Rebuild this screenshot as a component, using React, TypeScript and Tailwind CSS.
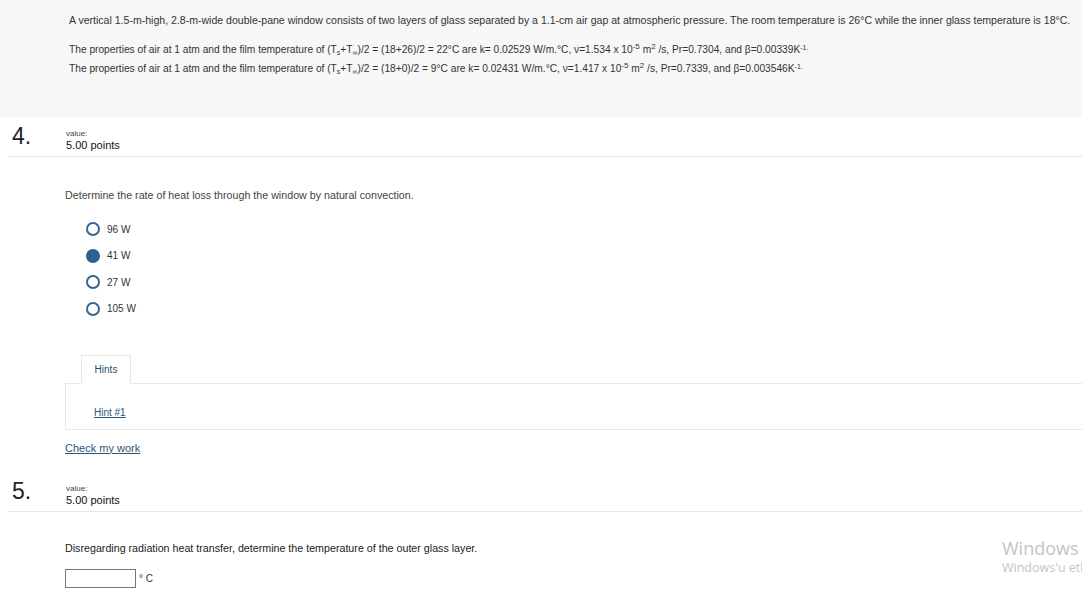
import React from 'react';

const font = { fontFamily: '"Liberation Sans", Arial, sans-serif' };

const options = ['96 W', '41 W', '27 W', '105 W'];

function Header({ num }: { num: string }) {
  return (
    <div className="flex items-start border-b border-[#e6e6e6] ml-2 h-[40px]">
      <div className="w-[58px] pl-1 pt-[8px] text-[23px] leading-[23px] text-[#222]">{num}</div>
      <div className="pt-[12px]">
        <div className="text-[8px] leading-[9px] text-[#444]">value:</div>
        <div className="text-[11px] leading-[14px] text-[#111]">5.00 points</div>
      </div>
    </div>
  );
}

function Radio({ checked }: { checked?: boolean }) {
  return checked ? (
    <span className="block w-[14px] h-[14px] rounded-full bg-[#2f5f94]" />
  ) : (
    <span className="block w-[14px] h-[14px] rounded-full border-2 border-[#3a6390] bg-white" />
  );
}

export default function App() {
  return (
    <div className="w-[1082px] h-[594px] overflow-hidden bg-white relative" style={font}>
      {/* problem statement */}
      <div className="bg-[#f7f7f7] h-[117px] pl-[69px] pt-[13px] text-[10.2px] text-[#333] whitespace-nowrap">
        <p className="leading-[15px] text-[10.55px]">
          A vertical 1.5-m-high, 2.8-m-wide double-pane window consists of two layers of glass separated by a 1.1-cm air gap at atmospheric pressure. The room temperature is 26°C while the inner glass temperature is 18°C.
        </p>
        <p className="leading-[15px] mt-[14px]">
          The properties of air at 1 atm and the film temperature of (T<sub className="text-[7px]">s</sub>+T<sub className="text-[7px]">∞</sub>)/2 = (18+26)/2 = 22°C are k= 0.02529 W/m.°C, ν=1.534 x 10<sup className="text-[8px]">-5</sup> m<sup className="text-[8px]">2</sup> /s, Pr=0.7304, and β=0.00339K<sup className="text-[7px]">-1.</sup>
        </p>
        <p className="leading-[15px] mt-[4px]">
          The properties of air at 1 atm and the film temperature of (T<sub className="text-[7px]">s</sub>+T<sub className="text-[7px]">∞</sub>)/2 = (18+0)/2 = 9°C are k= 0.02431 W/m.°C, ν=1.417 x 10<sup className="text-[8px]">-5</sup> m<sup className="text-[8px]">2</sup> /s, Pr=0.7339, and β=0.003546K<sup className="text-[7px]">-1.</sup>
        </p>
      </div>

      {/* question 4 */}
      <Header num="4." />
      <div className="pl-[65px]">
        <p className="mt-[32px] text-[10.7px] leading-[13px] text-[#444]">
          Determine the rate of heat loss through the window by natural convection.
        </p>
        <div className="ml-[21px] mt-[20px] flex flex-col gap-[12.5px]">
          {options.map((o, i) => (
            <label key={o} className="flex items-center gap-[7px] h-[14px]">
              <Radio checked={i === 1} />
              <span className="text-[10px] text-[#333]">{o}</span>
            </label>
          ))}
        </div>

        <div className="mt-[38px]">
          <div className="ml-[16px] w-[50px] h-[29px] border border-b-0 border-[#e8e8e8] bg-white flex items-center justify-center text-[10px] text-[#2c4f6e] relative top-[1px]">
            Hints
          </div>
          <div className="h-[47px] border border-r-0 border-[#e8e8e8] pl-[28px] pt-[15px]">
            <a className="text-[10px] text-[#2c5577] underline">Hint #1</a>
          </div>
        </div>

        <a className="block mt-[10px] text-[11px] text-[#2c5577] underline">Check my work</a>
      </div>

      {/* question 5 */}
      <div className="mt-[16px]">
        <Header num="5." />
      </div>
      <div className="pl-[65px]">
        <p className="mt-[30px] text-[10.7px] leading-[13px] text-[#222]">
          Disregarding radiation heat transfer, determine the temperature of the outer glass layer.
        </p>
        <div className="mt-[14px] flex items-center gap-[3px]">
          <input className="w-[71px] h-[19px] border border-[#777] bg-white" />
          <span className="text-[10px] text-[#333]">° C</span>
        </div>
      </div>

      {/* activation watermark */}
      <div className="absolute left-[1002px] top-[536px] whitespace-nowrap text-[#c4c4c4]" style={{ fontFamily: '"Open Sans", "Noto Sans", sans-serif' }}>
        <div className="text-[18px] leading-[24px]">Windows etkinleştir</div>
        <div className="text-[12.5px] leading-[16px]">Windows'u etkinleştirmek için Ayarlar'a gidin.</div>
      </div>
    </div>
  );
}
